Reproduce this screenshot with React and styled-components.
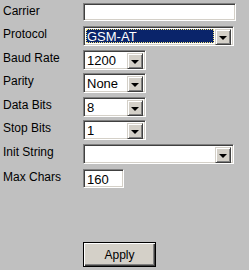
import React from "react";
import styled, { createGlobalStyle } from "styled-components";

const GlobalStyle = createGlobalStyle`
  body {
    margin: 0;
    background: #c0c0c0;
    font-family: "Liberation Sans", Arial, sans-serif;
  }
`;

const Panel = styled.div`
  width: 249px;
  height: 270px;
  box-sizing: border-box;
  padding: 3px 0 0 3px;
  display: flex;
  flex-direction: column;
`;

const Row = styled.div`
  display: flex;
  align-items: flex-start;
  height: ${(p) => p.h}px;
`;

const Label = styled.div`
  width: 80px;
  font-size: 12px;
  line-height: 14px;
  padding-top: ${(p) => p.top || 1}px;
  color: #000;
`;

const sunken = `
  box-sizing: border-box;
  border: 1px solid;
  border-color: #808080 #ffffff #ffffff #808080;
  box-shadow: inset 1px 1px #404040, inset -1px -1px #d4d0c8;
  background: #ffffff;
`;

const TextBox = styled.div`
  ${sunken}
  width: ${(p) => p.w}px;
  height: ${(p) => p.h || 18}px;
  padding: 3px 3px;
  font-size: 13px;
  line-height: 13px;
  color: #000;
`;

const Combo = styled.div`
  ${sunken}
  width: ${(p) => p.w}px;
  height: 20px;
  padding: 2px;
  display: flex;
`;

const ComboValue = styled.div`
  flex: 1;
  font-size: 13px;
  line-height: 16px;
  padding-left: 1px;
  color: ${(p) => (p.selected ? "#ffffff" : "#000000")};
  background: ${(p) => (p.selected ? "#0a246a" : "transparent")};
  outline: ${(p) => (p.selected ? "1px dotted #f4e37a" : "none")};
  outline-offset: -1px;
  margin-right: 1px;
`;

const ArrowButton = styled.div`
  box-sizing: border-box;
  width: 16px;
  height: 16px;
  background: #d4d0c8;
  border: 1px solid;
  border-color: #d4d0c8 #404040 #404040 #d4d0c8;
  box-shadow: inset 1px 1px #ffffff, inset -1px -1px #808080;
  display: flex;
  align-items: center;
  justify-content: center;

  &::after {
    content: "";
    width: 0;
    height: 0;
    margin-top: 1px;
    border-left: 4px solid transparent;
    border-right: 4px solid transparent;
    border-top: 4px solid #000;
  }
`;

const ButtonRow = styled.div`
  display: flex;
  padding-left: 80px;
  margin-top: 53px;
`;

const Button = styled.button`
  width: 73px;
  height: 25px;
  background: #d4d0c8;
  border: 1px solid #000;
  box-shadow: inset 1px 1px #ffffff, inset -1px -1px #404040,
    inset -2px -2px #808080;
  font-family: "Liberation Sans", Arial, sans-serif;
  font-size: 12px;
  color: #000;
  padding: 0;
`;

const ComboBox = ({ w, value, selected }) => (
  <Combo w={w}>
    <ComboValue selected={selected}>{value}</ComboValue>
    <ArrowButton />
  </Combo>
);

const fields = [
  { label: "Protocol", w: 151, value: "GSM-AT", selected: true, h: 24 },
  { label: "Baud Rate", w: 63, value: "1200", h: 23 },
  { label: "Parity", w: 63, value: "None", h: 24 },
  { label: "Data Bits", w: 63, value: "8", h: 23 },
  { label: "Stop Bits", w: 63, value: "1", h: 24 },
  { label: "Init String", w: 151, value: "", h: 25 },
];

const App = () => (
  <>
    <GlobalStyle />
    <Panel>
      <Row h={23}>
        <Label top={0}>Carrier</Label>
        <TextBox w={153} />
      </Row>
      {fields.map((f) => (
        <Row key={f.label} h={f.h}>
          <Label>{f.label}</Label>
          <ComboBox w={f.w} value={f.value} selected={f.selected} />
        </Row>
      ))}
      <Row h={20}>
        <Label>Max Chars</Label>
        <TextBox w={41} h={19}>160</TextBox>
      </Row>
      <ButtonRow>
        <Button>Apply</Button>
      </ButtonRow>
    </Panel>
  </>
);

export default App;
